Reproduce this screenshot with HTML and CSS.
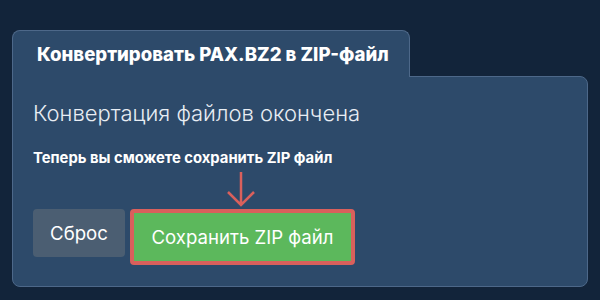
FILE: index.html
```html
<!DOCTYPE html>
<html lang="ru">
<head>
    <meta charset="UTF-8">
    <title>Конвертировать PAX.BZ2 в ZIP-файл</title>
    <link rel="stylesheet" href="styles.css">
</head>
<body>
    <div class="wrap">
        <div class="tab">Конвертировать PAX.BZ2 в ZIP-файл</div>
        <div class="panel">
            <h2 class="done">Конвертация файлов окончена</h2>
            <p class="hint">Теперь вы сможете сохранить ZIP файл</p>
            <div class="arrow-row">
                <svg class="arrow" width="30" height="36" viewBox="0 0 30 36">
                    <path d="M15 0 V33 M2 20 L15 33 L28 20" fill="none" stroke="#d9605c" stroke-width="2.5"/>
                </svg>
            </div>
            <div class="actions">
                <button class="btn reset">Сброс</button>
                <button class="btn save">Сохранить ZIP файл</button>
            </div>
        </div>
    </div>
</body>
</html>
```

FILE: styles.css
```css
* {
    margin: 0;
    padding: 0;
    box-sizing: border-box;
}

body {
    background-color: #12243a;
    font-family: Inter, "Noto Sans", sans-serif;
    color: #fff;
}

.wrap {
    padding: 30px 12px 0 12px;
}

.tab {
    display: inline-block;
    position: relative;
    z-index: 1;
    width: 398px;
    height: 47px;
    margin-bottom: -1px;
    padding: 12px 0 0 24px;
    background-color: #2d4a6a;
    border: 1px solid #4d6889;
    border-bottom: none;
    border-radius: 8px 8px 0 0;
    font-size: 18.6px;
    font-weight: 800;
}

.panel {
    height: 211px;
    background-color: #2d4a6a;
    border: 1px solid #4d6889;
    border-radius: 0 8px 8px 8px;
    padding: 21px 20px 0 20px;
}

.done {
    font-size: 22px;
    font-weight: 300;
    line-height: 30px;
    color: #e8edf3;
}

.hint {
    margin-top: 20px;
    font-size: 14.8px;
    font-weight: 700;
    line-height: 20px;
}

.arrow-row {
    height: 41px;
    padding-left: 193px;
    padding-top: 4px;
}

.arrow {
    display: block;
}

.actions {
    display: flex;
    align-items: flex-start;
    gap: 5px;
}

.btn {
    font-family: Inter, "Noto Sans", sans-serif;
    font-size: 18.6px;
    color: #fff;
    border: none;
    border-radius: 4px;
    cursor: pointer;
}

.reset {
    width: 92px;
    height: 48px;
    background-color: #4b5e72;
}

.save {
    width: 225px;
    height: 56px;
    background-color: #5cb85c;
    border: 4px solid #d9605c;
}
```
